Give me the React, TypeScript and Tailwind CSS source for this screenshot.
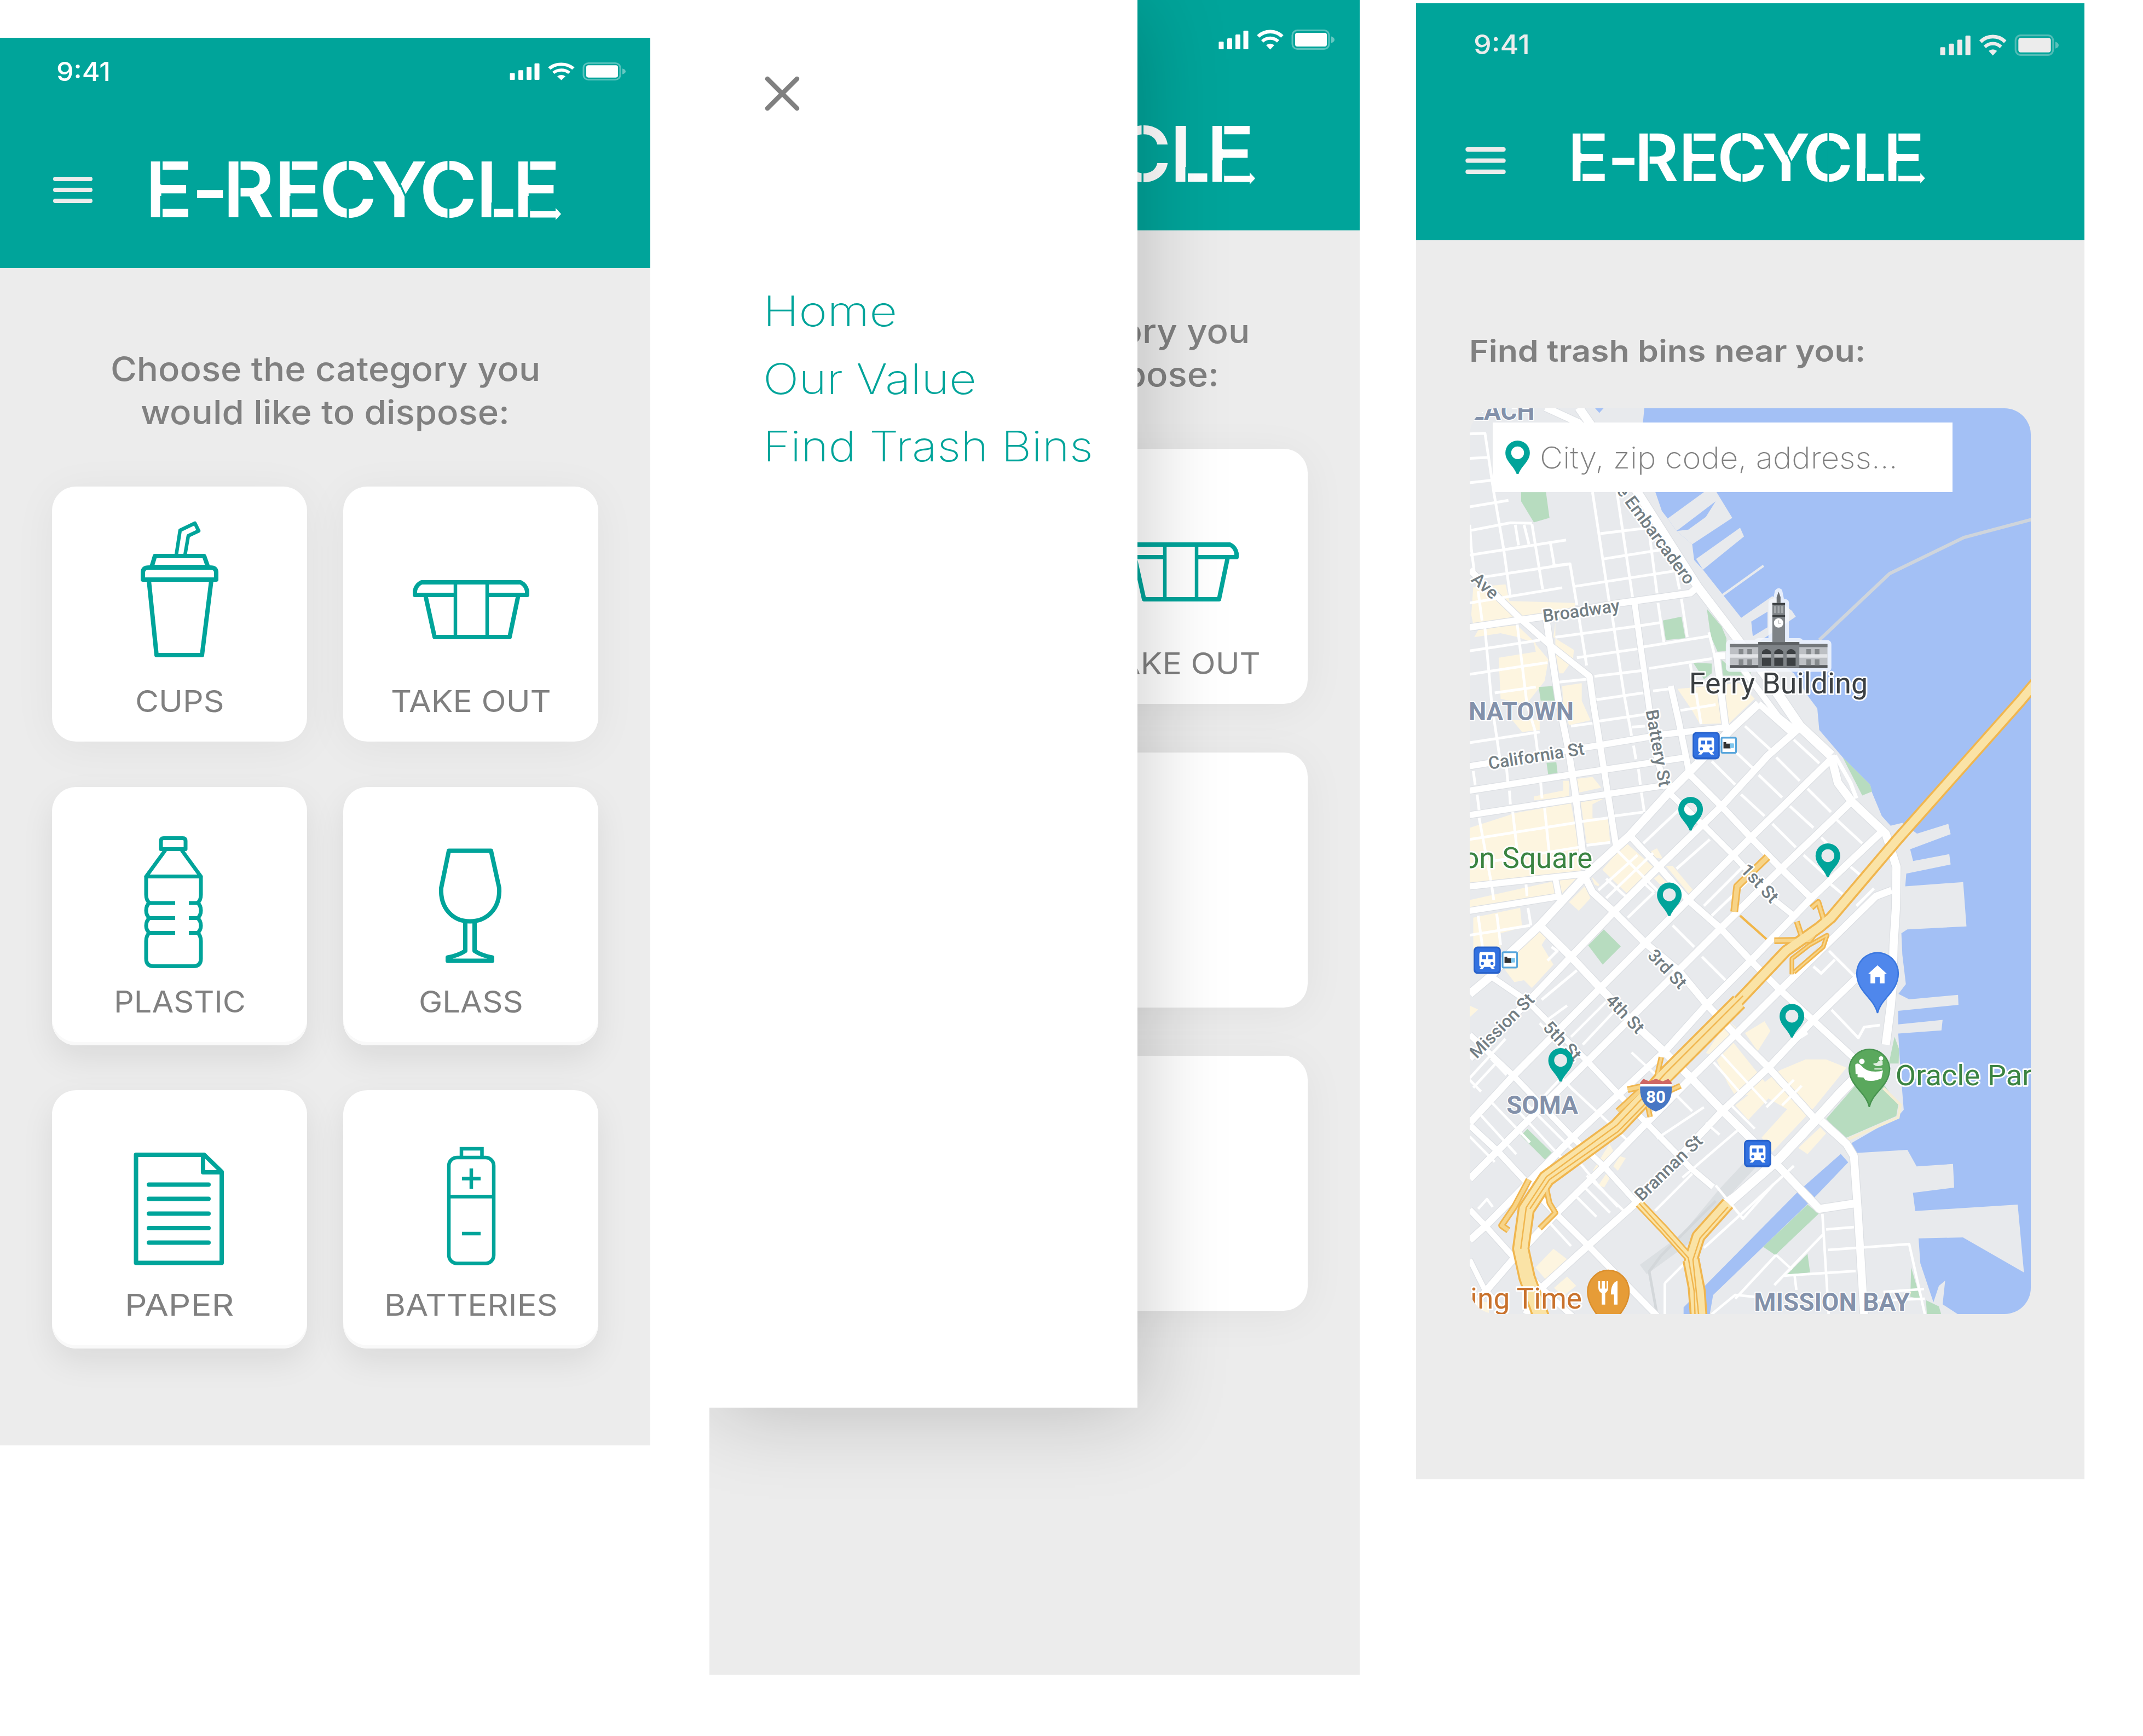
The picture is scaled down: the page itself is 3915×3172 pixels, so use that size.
import { useLayoutEffect, useRef, useState, type ReactNode } from "react";

const SANS = "font-['Inter','Noto_Sans',sans-serif]";

/* Single line of text stretched horizontally to a given width. */
function Fit({ w, className = "", children }: { w: number; className?: string; children: string }) {
  const ref = useRef<HTMLSpanElement>(null);
  const [scale, setScale] = useState(1);
  useLayoutEffect(() => {
    if (ref.current) setScale(w / ref.current.offsetWidth);
  }, [w, children]);
  return (
    <span className={`block ${className}`} style={{ width: w }}>
      <span ref={ref} className="inline-block origin-left whitespace-nowrap" style={{ transform: `scaleX(${scale})` }}>
        {children}
      </span>
    </span>
  );
}

function StatusIcons({ className, color }: { className: string; color: string }) {
  return (
    <svg viewBox="0 0 212 37" preserveAspectRatio="none" className={className} fill={color}>
      <rect x="0.5" y="22" width="9" height="14" rx="1.500" />
      <rect x="16" y="16" width="9" height="20" rx="1.500" />
      <rect x="31" y="9" width="9" height="27" rx="1.500" />
      <rect x="45.500" y="2" width="9" height="34" rx="1.500" />
      <path d="M72.500 12.500 A32 32 0 0 1 116.500 12.500" fill="none" stroke={color} strokeWidth="6.500" />
      <path d="M80 21.500 A21 21 0 0 1 109 21.500" fill="none" stroke={color} strokeWidth="6" />
      <path d="M87 28.500 Q94.500 23 102 28.500 L94.500 36.500 Z" />
      <rect x="135" y="1.500" width="67" height="34" rx="9" fill="none" stroke={color} strokeWidth="3" opacity="0.35" />
      <rect x="140" y="6" width="58" height="25" rx="4" />
      <path d="M206 12.500 q6 2 6 6 q0 4 -6 6 z" opacity="0.4" />
    </svg>
  );
}

function Hamburger({ className }: { className: string }) {
  return (
    <svg viewBox="0 0 72 50" className={className} stroke="#ececec" strokeWidth="8" strokeLinecap="round">
      <path d="M4 5 H68 M4 25 H68 M4 45 H68" />
    </svg>
  );
}

/* Stencil wordmark: text with narrow breaks cut through it. */
function Wordmark({ className }: { className: string }) {
  return (
    <svg viewBox="276 296 749 103" className={`overflow-visible ${className}`}>
      <text
        transform="scale(1.03 1)"
        x="257.5 340 395.300 486.600 566 658.500 743.700 844 909.200"
        y="397.5"
        fontSize="139.5"
        fontWeight="560"
        fontFamily="Inter, sans-serif"
        fill="#fff"
      >
        E-RECYCLE
      </text>
      <g fill="#00a49a">
        <rect x="292.500" y="294" width="4.500" height="43" />
        <rect x="292.500" y="358" width="4.500" height="44" />
        <rect x="435.500" y="294" width="4" height="108" />
        <rect x="529" y="294" width="4" height="43" />
        <rect x="529" y="358" width="4" height="44" />
        <rect x="633.500" y="292" width="3.500" height="110" />
        <rect x="817.500" y="292" width="3.500" height="110" />
        <rect x="897.500" y="370" width="4.500" height="30" />
        <rect x="937.500" y="375" width="9.500" height="26" />
        <rect x="964" y="294" width="4.500" height="43" />
        <rect x="964" y="358" width="4.500" height="44" />
        <rect x="968.500" y="378" width="54" height="8" />
      </g>
      <path d="M731 337 L741 359" stroke="#00a49a" strokeWidth="3.500" />
      <path d="M968.500 386 H1015 V380 L1025 391 L1015 402 V397.500 H968.500 Z" fill="#fff" />
    </svg>
  );
}

const iconProps = { fill: "none", stroke: "#00a49a", strokeWidth: 8, strokeLinejoin: "round" as const };

const CupIcon = () => (
  <svg viewBox="95 889 466 370" className="h-[370px] w-[466px]" {...iconProps}>
    <path d="M283 1016 H373 L380 1036 H277 Z" />
    <path d="M261 1059 V1046 Q261 1037 272 1037 H384 Q395 1037 395 1046 V1059 Z" />
    <path d="M272 1061 L286 1197 H369 L386 1061" />
    <path d="M322 1014 L329 969 L356 956 L363 970 L344 979 L338 1014" strokeWidth="6.500" />
  </svg>
);

const TakeOutIcon = () => (
  <svg viewBox="627 889 466 370" className="h-[370px] w-[466px]" {...iconProps}>
    <path d="M832 1087 H758 V1080 Q760 1069 770 1064 H951 Q961 1069 963 1080 V1087 H890" />
    <path d="M777 1087 L794 1164 H931 L947 1087" />
    <path d="M832 1064 V1164 M890 1064 V1164" strokeWidth="6.500" />
  </svg>
);

const BottleIcon = () => (
  <svg viewBox="95 1438.5 466 370" className="h-[370px] w-[466px]" {...iconProps} strokeWidth="7">
    <path d="M294 1552 V1537 Q294 1532 299 1532 H334 Q339 1532 339 1537 V1552 Z" />
    <path d="M302 1554 L267 1602 H367 L332 1554" />
    <path d="M267 1602 V1635 Q267 1646 273 1650 Q267 1655 267 1664 Q267 1673 273 1678 Q267 1683 267 1692 Q267 1700 273 1705 Q267 1710 267 1720 V1752 Q267 1766 281 1766 H353 Q367 1766 367 1752 V1720 Q367 1710 361 1705 Q367 1700 367 1692 Q367 1683 361 1678 Q367 1673 367 1664 Q367 1655 361 1650 Q367 1646 367 1635 V1602" />
    <path d="M272 1650.500 H320 M345 1650.500 H361 M272 1678 H320 M345 1678 H361 M272 1705 H320 M345 1705 H361" />
  </svg>
);

const GlassIcon = () => (
  <svg viewBox="627 1438.5 466 370" className="h-[370px] w-[466px]" {...iconProps}>
    <path d="M820 1555 H897 L912 1623 C914 1660 890 1684 858.500 1684 C827 1684 804 1660 806 1623 Z" />
    <path d="M850 1685 V1738 Q838 1746 818 1750 V1756 H899 V1750 Q879 1746 867 1738 V1685" />
  </svg>
);

const PaperIcon = () => (
  <svg viewBox="95 1992 466 370" className="h-[370px] w-[466px]" {...iconProps}>
    <path d="M248.500 2110 H373 L405 2141 V2307.500 H248.500 Z" />
    <path d="M371 2110 V2142 H405" />
    <path d="M272 2164.500 H381 M272 2190.500 H381 M272 2217.500 H381 M272 2244 H381 M272 2270.500 H381" strokeLinecap="round" />
  </svg>
);

const BatteryIcon = () => (
  <svg viewBox="627 1992 466 370" className="h-[370px] w-[466px]" {...iconProps} strokeWidth="6.500">
    <path d="M843 2114 V2099 H880.500 V2114" strokeLinejoin="miter" />
    <rect x="820" y="2115" width="82" height="193.500" rx="15" />
    <path d="M820 2186.500 H902 M844 2153.500 H878 M861 2135 V2172 M844 2254 H878" />
  </svg>
);

function Card({ icon, label, w, className }: { icon?: ReactNode; label?: string; w?: number; className: string }) {
  return (
    <div className={`flex w-[466px] flex-col items-center rounded-[44px] bg-white ${className}`}>
      {icon}
      {label && w ? (
        <Fit w={w} className="text-[55px] leading-[44px] font-[430] text-[#808080]">
          {label}
        </Fit>
      ) : null}
    </div>
  );
}

const SOFT = "h-[466px] shadow-[0_10px_80px_rgba(0,0,0,0.05)]";
const DEEP = "h-[472px] shadow-[inset_0_-6px_0_#f9f9f9,0_24px_60px_rgba(0,0,0,0.08)]";

function Prompt() {
  return (
    <div className="mt-[145px] flex flex-col items-center text-[61px] leading-[79px] font-[450] text-[#808080]">
      <Fit w={785}>Choose the category you</Fit>
      <Fit w={674}>would like to dispose:</Fit>
    </div>
  );
}

function HomeScreen() {
  return (
    <section className="mt-[69px] h-[2572px] w-[1188px] shrink-0 overflow-hidden bg-[#ececec]">
      <header className="h-[421px] bg-[#00a49a]">
        <div className="flex h-[123px] items-center justify-between pr-[45px] pl-[103px]">
          <Fit w={99} className="text-[48px] leading-[60px] font-medium text-white">
            9:41
          </Fit>
          <StatusIcons className="h-[33px] w-[212px]" color="#fff" />
        </div>
        <div className="mt-[104px] flex h-[102px] items-center pl-[97px]">
          <Hamburger className="h-[50px] w-[72px]" />
          <Wordmark className="ml-[107px] h-[103px] w-[749px]" />
        </div>
      </header>
      <Prompt />
      <div className="mt-[96px] flex flex-col gap-[82.5px] pl-[95px]">
        <div className="flex gap-[66px]">
          <Card className={SOFT} icon={<CupIcon />} label="CUPS" w={163} />
          <Card className={SOFT} icon={<TakeOutIcon />} label="TAKE OUT" w={293} />
        </div>
        <div className="flex gap-[66px]">
          <Card className={DEEP} icon={<BottleIcon />} label="PLASTIC" w={241} />
          <Card className={DEEP} icon={<GlassIcon />} label="GLASS" w={191} />
        </div>
        <div className="flex gap-[66px]">
          <Card className={DEEP} icon={<PaperIcon />} label="PAPER" w={200} />
          <Card className={DEEP} icon={<BatteryIcon />} label="BATTERIES" w={317} />
        </div>
      </div>
    </section>
  );
}

function MenuScreen() {
  return (
    <section className="relative ml-[108px] h-[3060px] w-[1188px] shrink-0 overflow-hidden bg-[#ececec]">
      <header className="h-[421px] bg-[#00a49a]">
        <div className="flex h-[145px] items-center justify-end pr-[46px]">
          <StatusIcons className="h-[37px] w-[212px]" color="#fff" />
        </div>
        <div className="mt-[86px] flex h-[102px] items-center pl-[248px]">
          <Wordmark className="h-[103px] w-[749px]" />
        </div>
      </header>
      <Prompt />
      <div className="mt-[96px] flex flex-col gap-[88.5px] pl-[95px]">
        <div className="flex gap-[66px]">
          <Card className={SOFT} />
          <Card className={SOFT} icon={<TakeOutIcon />} label="TAKE OUT" w={293} />
        </div>
        <div className="flex gap-[66px]">
          <Card className={SOFT} />
          <Card className={SOFT} />
        </div>
        <div className="flex gap-[66px]">
          <Card className={SOFT} />
          <Card className={SOFT} />
        </div>
      </div>
      <aside className="absolute top-0 left-0 h-[2572px] w-[782px] bg-white pt-[139px] pl-[101px] shadow-[10px_10px_150px_rgba(0,0,0,0.2)]">
        <svg viewBox="0 0 64 64" className="h-[64px] w-[64px]" stroke="#808080" strokeWidth="8.500" strokeLinecap="round">
          <path d="M5 5 L59 59 M59 5 L5 59" />
        </svg>
        <nav className="-ml-[3px] mt-[304px] flex flex-col text-[77px] leading-[123.5px] font-[250] text-[#00a49a]">
          <Fit w={245}>Home</Fit>
          <Fit w={390}>Our Value</Fit>
          <Fit w={603}>Find Trash Bins</Fit>
        </nav>
      </aside>
    </section>
  );
}

/* ---------- Map ---------- */

const PIN = "M-5 172 C-20 130 -63 108 -63 63 A63 63 0 0 1 63 63 C63 108 20 130 5 172 Z M33 63 A33 33 0 1 0 -33 63 A33 33 0 1 0 33 63 Z";

const WATER =
  "935,44 928,118 960,380 1025,570 1055,608 1100,672 1180,740 1190,820 1235,870 1330,990 1430,1115 1482,1130 1490,1210 1560,1300 1700,1400 1775,1520 1820,1580 1830,1690 1950,1830 2090,1970 2100,2010 2150,2130 2195,2180 2255,2165 2330,2220 2490,2170 2502,2223 2295,2300 2310,2360 2495,2325 2502,2378 2275,2425 2270,2490 2566,2468 2583,2695 2280,2710 2250,2730 2255,2840 2273,2990 2235,3040 2290,3068 2540,3045 2542,3096 2234,3127 2234,3196 2461,3173 2455,3227 2234,3243 2243,3396 2262,3633 2234,3665 1988,3807 2016,3854 2281,3838 2328,3923 2514,3910 2520,4031 2309,4058 2321,4151 2845,4118 2877,4465 2565,4286 2338,4291 2347,4418 2414,4618 2442,4534 2474,4507 2461,4628 2556,4690 2920,4690 2920,40 935,40";

const WATER_SMALL = [
  "1940,3859 1978,3902 1817,4070 1287,4581 1268,4690 1136,4690 1136,4644 1713,4060 1760,4017",
  "680,40 730,40 705,68",
];

const PIERS = [
  "1055,608 1240,473 1200,400 1260,400 1385,605 1180,740 1100,672",
  "1200,815 1425,655 1445,700 1235,870",
  "1432,1115 1590,1005 1690,1080 1710,1110 1490,1260",
];

const PIER_WATER = ["1100,672 1300,520 1250,600 1160,665", "1482,1135 1565,1085 1565,1165 1490,1210"];

const SHOPS = [
  "50,1100 60,960 225,945 245,1030 580,1040 580,1060 400,1110 60,1150",
  "65,1215 90,1170 285,1155 385,1250 290,1215 200,1195",
  "190,1320 380,1290 370,1240 445,1330 425,1440 330,1560 200,1530",
  "480,1140 470,1215 575,1280 570,1330 520,1400 500,1400 480,1290",
  "515,1465 615,1450 615,1540 660,1640 550,1665 520,1560",
  "260,1640 400,1640 400,1690 310,1700",
  "42,2190 230,2130 270,2115 560,2065 600,2290 610,2410 42,2490",
  "585,1940 670,1930 715,1985 600,2010",
  "370,2030 520,2000 520,1950 550,1950 550,2030 370,2050",
  "610,2060 730,2040 670,2070 670,2140 750,2145 760,2265 640,2270",
  "42,2560 600,2435 510,2530 42,2600",
  "720,2405 840,2265 980,2390 850,2530",
  "550,2570 630,2490 660,2550 600,2615",
  "665,2440 705,2480 700,2490 680,2480",
  "60,2650 300,2600 310,2700 200,2730 200,2820 60,2820",
  "210,2900 400,2720 435,2750 410,2790 470,2890 360,3010 320,2970 270,2980",
  "1045,2385 1080,2385 1185,2510 1165,2530",
  "985,2450 1010,2430 1050,2470 1015,2480",
  "1105,1480 1420,1450 1500,1530 1370,1655 1220,1660 1180,1590",
  "970,2310 1000,2295 1030,2350 980,2340",
  "1363,3175 1410,3217 1287,3354 1250,3343",
  "1550,3180 1580,3230 1515,3333 1450,3240",
  "1306,3380 1391,3290 1600,3550 1400,3560 1363,3500",
  "1400,3610 1630,3430 1760,3375 1865,3375 1969,3417 1808,3617 1590,3849 1535,3775 1666,3630 1570,3575 1467,3685",
  "1723,3828 1836,3722 1865,3754 1770,3860",
  "378,4440 470,4344 540,4397 440,4512",
  "473,4544 540,4486 587,4534 520,4586",
  "672,3944 757,3807 786,3860 691,3955",
  "776,3922 810,3870 840,3880 800,3945",
  "700,4020 740,3960 757,3985 730,4030",
  "42,3100 85,3120 42,3160",
  "42,4600 140,4620 140,4679 42,4679",
];

const PARKS = [
  "305,473 432,473 450,605 370,628 305,520",
  "1030,1130 1125,1110 1145,1220 1045,1230",
  "1255,1070 1330,1160 1355,1220 1355,1285 1310,1290 1275,1210",
  "1185,1345 1280,1350 1280,1400 1240,1430",
  "1330,1330 1380,1375 1480,1395 1480,1412 1335,1412",
  "395,1470 470,1465 480,1540 405,1540",
  "435,1858 485,1855 492,1915 443,1915",
  "728,2710 815,2797 722,2890 648,2792",
  "1950,1830 2090,1970 2100,2005 2050,2025",
  "2022,3500 2158,3500 2234,3607 2224,3665 1959,3780 1865,3680",
  "2215,3259 2238,3322 2236,3396 2186,3396",
  "337,3731 464,3854 432,3893 303,3765",
  "1770,4118 1827,4165 1605,4376 1543,4334",
  "1770,4370 1783,4465 1666,4476",
  "2300,4439 2347,4600 2296,4590",
  "2376,4607 2442,4639 2457,4690 2381,4690",
];

/* [width, points] */
const ROADS: [number, string][] = [
  [13, "42,175 120,172 165,473 215,760 250,1010"],
  [13, "42,640 50,760 65,880"],
  [13, "275,640 292,745"],
  [13, "320,640 345,740"],
  [13, "360,635 415,970"],
  [13, "455,735 475,850"],
  [13, "465,850 555,840 590,1050"],
  [13, "670,473 755,1030"],
  [13, "795,473 875,1010"],
  [13, "955,640 1000,990"],
  [13, "1095,870 1115,970"],
  [13, "42,300 140,295"],
  [13, "42,425 155,412"],
  [13, "42,548 240,515"],
  [13, "42,670 250,630 360,632"],
  [13, "42,795 535,718"],
  [13, "65,915 555,840"],
  [13, "42,1040 515,962"],
  [13, "710,685 960,655"],
  [13, "725,815 1040,765"],
  [13, "580,955 1100,875"],
  [13, "85,980 105,1130"],
  [13, "120,1170 155,1560 200,1860"],
  [13, "285,1150 335,1560 375,1690 395,1850"],
  [13, "600,1110 640,1360"],
  [13, "770,1100 830,1500 870,1720"],
  [13, "1005,1040 1035,1240"],
  [13, "1125,1020 1155,1215"],
  [13, "1265,1190 1300,1330"],
  [13, "42,1285 400,1230"],
  [13, "42,1405 440,1345"],
  [13, "170,1500 380,1470"],
  [13, "480,1215 890,1160 1020,1140"],
  [13, "590,1320 900,1275"],
  [13, "930,1265 1265,1210"],
  [13, "680,1415 930,1385"],
  [13, "960,1375 1280,1325"],
  [13, "1170,1350 1185,1450"],
  [13, "500,1445 640,1430"],
  [13, "690,1535 930,1500"],
  [13, "980,1490 1060,1480"],
  [13, "42,1755 400,1700"],
  [13, "560,1670 670,1655"],
  [13, "700,1645 940,1610"],
  [13, "870,1675 940,1670"],
  [13, "1120,1590 1300,1560"],
  [13, "1200,1500 1225,1660"],
  [13, "60,1900 70,1970"],
  [13, "230,1880 237,1960"],
  [13, "405,1960 412,2040"],
  [13, "245,2000 250,2070"],
  [13, "80,2020 90,2100"],
  [13, "880,1770 892,1840"],
  [13, "905,1890 915,1970"],
  [13, "920,2010 935,2110"],
  [13, "42,2250 580,2165"],
  [13, "42,2380 600,2290"],
  [13, "90,2140 150,2460"],
  [13, "262,2110 295,2400"],
  [13, "425,2090 455,2380"],
  [13, "600,2160 750,2140"],
  [13, "640,2280 760,2265"],
  [13, "780,2130 930,2110"],
  [13, "155,2490 165,2560"],
  [13, "330,2480 335,2540"],
  [13, "42,2740 350,2690"],
  [13, "340,2600 355,2690"],
  [13, "85,2640 110,2820"],
  [13, "180,2630 200,2790"],
  [13, "790,2300 970,2480 1010,2520"],
  [13, "740,2550 980,2320"],
  [13, "700,2510 900,2330"],
  [13, "740,2450 860,2560"],
  [13, "930,2270 1110,2100"],
  [13, "850,2650 985,2520"],
  [13, "940,2480 985,2520"],
  [13, "1100,2400 1270,2250"],
  [13, "1240,2590 1450,2380"],
  [13, "1280,2640 1500,2430"],
  [13, "1080,2690 1190,2800"],
  [13, "1230,2850 1350,2970"],
  [13, "410,3070 590,2920"],
  [13, "1280,1850 1400,1970"],
  [13, "1430,2020 1550,2130"],
  [13, "1450,1670 1580,1790"],
  [13, "1400,1800 1490,1885"],
  [13, "1700,1740 1830,1860"],
  [13, "1610,1830 1730,1950"],
  [13, "1770,1990 1890,2110"],
  [13, "1520,1920 1640,2035"],
  [13, "1680,2080 1800,2190"],
  [13, "1920,2150 2050,2270"],
  [13, "1590,2170 1710,2290"],
  [13, "1840,2240 1880,2280"],
  [13, "1750,2330 1860,2430"],
  [13, "1990,2390 2050,2440"],
  [13, "1890,2480 1950,2530"],
  [13, "2020,2590 2110,2500"],
  [13, "1880,2820 2010,2950"],
  [13, "1800,2900 1840,2935 1910,2865"],
  [13, "1893,3122 2030,3265 2060,3210 2140,3200"],
  [13, "1690,3290 1770,3240"],
  [13, "460,2800 490,2820 440,2870"],
  [12, "42,3470 225,3270"],
  [12, "60,3520 190,3380"],
  [12, "42,3480 100,3540"],
  [12, "150,3370 230,3455"],
  [12, "400,3190 560,3360"],
  [12, "430,3180 540,3100"],
  [12, "350,3640 500,3480"],
  [12, "560,3260 740,3080"],
  [12, "620,3300 780,3130"],
  [12, "470,3420 560,3520 700,3650"],
  [12, "80,3640 280,3860"],
  [12, "140,3580 350,3800"],
  [12, "290,3640 530,3900"],
  [12, "330,3600 600,3870"],
  [12, "42,3770 170,3900"],
  [12, "230,3900 330,4010"],
  [12, "690,3640 860,3800"],
  [12, "870,3340 1000,3460"],
  [12, "560,3850 700,4020 800,4130"],
  [12, "580,4070 690,4180"],
  [12, "620,4020 760,4160"],
  [12, "640,3970 830,4150"],
  [12, "1000,3780 1240,3620"],
  [12, "1130,3980 1410,3740"],
  [12, "990,4150 1180,3960"],
  [12, "450,4210 560,4330"],
  [12, "1250,3700 1320,3760"],
  [12, "1360,3590 1500,3730"],
  [12, "1290,3390 1420,3540"],
  [12, "1330,3350 1560,3600"],
  [12, "1560,3620 1700,3480"],
  [12, "1640,3610 1740,3510"],
  [12, "1040,3500 1180,3640"],
  [12, "1300,4020 1440,4190 1600,4010"],
  [12, "1240,4340 1700,3920"],
  [12, "1340,4100 1470,4010"],
  [12, "85,4140 130,4090 160,4130"],
  [12, "1040,4520 1160,4400"],
  [12, "1040,4679 1040,4520"],
  [12, "1846,4165 1878,4679"],
  [12, "1865,4245 2007,4233"],
  [12, "1874,4350 2290,4320 2370,4679"],
  [12, "1647,4482 2016,4458"],
  [12, "2158,4565 2366,4550"],
  [12, "1704,4482 1713,4555"],
  [12, "1609,4376 1400,4600"],
  [12, "1609,4376 1690,4450"],
  [12, "1850,4270 1600,4530"],
  [12, "1280,4679 1400,4580 1500,4590"],
  [12, "2080,4610 2370,4600"],
  [36, "430,40 600,118 900,473"],
  [44, "600,40 900,473 1210,960 1340,1130 1560,1420"],
  [50, "1560,1420 1730,1670 1890,1820"],
  [30, "1440,1380 1620,1620 1720,1700"],
  [42, "1890,1820 1925,1960 2000,2060 2170,2220 2225,2390 2222,2600 2210,2790 2205,3000 2195,3108 2170,3300"],
  [20, "1910,1820 1990,1960 2020,2040"],
  [48, "2140,3340 1931,3554 1817,3680 1628,3881 1363,4112"],
  [40, "1840,3690 1969,3807 2007,3870 2026,4133 2060,4690"],
  [34, "42,1165 420,1110 780,1045 1170,990 1215,950"],
  [32, "42,870 300,1120 470,1270 655,1415 675,1560 730,1900 790,2280"],
  [34, "435,1130 500,1560 545,1780 580,2000 620,2320"],
  [30, "885,1040 955,1540 990,1800 1045,1990"],
  [32, "1070,1465 1110,1640 1165,1910"],
  [34, "1350,1310 1305,1310 1350,1670"],
  [32, "42,1875 600,1785 1050,1710 1370,1675"],
  [32, "42,2000 550,1920 1150,1830"],
  [32, "42,2125 600,2040 1060,1970"],
  [32, "42,2490 640,2425"],
  [32, "42,2615 510,2540"],
  [30, "480,2450 500,2550"],
  [42, "1520,1555 1380,1685 1170,1900 1060,2010 860,2230 630,2440 400,2690 250,2830 150,2950 42,3040"],
  [32, "1520,1555 1700,1715"],
  [36, "1740,1670 1568,1820 1330,2080 1010,2390 780,2620 560,2850 340,3080 42,3370"],
  [36, "1890,1840 1480,2240 1390,2330 1160,2560 940,2780 710,3010 265,3459 42,3700"],
  [36, "1990,2060 1635,2400 1325,2705 1110,2920 833,3196 644,3385 189,3838 42,3986"],
  [36, "2150,2210 1790,2550 1480,2870 1255,3095 1041,3333 568,3775 123,4228 42,4300"],
  [36, "2200,2510 2120,2540 1630,3020 1401,3248 1174,3470 946,3701 729,3923 483,4165 265,4397 90,4600"],
  [36, "2030,2950 1798,3175 1571,3417 1335,3638 890,4112 653,4323 397,4555 330,4679"],
  [34, "1160,1910 1330,2080 1480,2240 1635,2400 1790,2550"],
  [34, "860,2230 1010,2390 1160,2560 1325,2705 1480,2870 1630,3020 1798,3175 2010,3370"],
  [30, "1060,2010 1240,2180 1390,2330 1600,2560 1700,2640"],
  [36, "630,2440 670,2520 780,2620 940,2780 1110,2920 1255,3095 1401,3248 1571,3417 1817,3690"],
  [40, "400,2690 560,2850 710,3010 860,3170 1041,3340 1174,3470 1335,3638 1590,3890 1830,4140 2026,4110"],
  [30, "150,2950 340,3080 644,3385 800,3550 946,3701 1174,3933 1287,4028"],
  [30, "42,3249 265,3459 568,3775 729,3923 900,4112"],
  [32, "42,3712 189,3849 483,4165 653,4333 1003,4690"],
  [30, "42,4144 123,4228 265,4386 397,4534 568,4690"],
  [26, "42,4400 114,4544 200,4640"],
];

/* [outer width, points] */
const HIGHWAYS: [number, string][] = [
  [40, "1565,2340 1410,2490 1395,2620"],
  [30, "1790,2600 1825,2570 1850,2650 1850,2710"],
  [34, "1600,2768 1780,2765 1830,2700"],
  [30, "1715,2670 1745,2760"],
  [24, "1690,2940 1690,2860 1780,2790 1870,2740 1850,2800 1700,2930"],
  [34, "240,4250 205,4225 270,4130 345,3990"],
  [30, "400,4240 480,4160 450,4110 435,4040"],
  [28, "1022,3364 1000,3460"],
  [30, "1120,3510 1010,3560"],
  [34, "850,3530 940,3510 800,3640"],
  [28, "965,3670 950,3600"],
  [48, "909,4112 1040,4250 1174,4400 1200,4500"],
  [72, "1363,4112 1212,4281 1174,4400 1190,4500 1205,4700"],
  [88, "1174,4400 1205,4560 1215,4700"],
  [62, "2960,1420 2860,1540 2230,2250 1890,2650 1830,2700 1660,2820 1400,3095"],
  [88, "1420,3080 1041,3459 984,3522 795,3722 435,3985 331,4143 303,4344 335,4491 410,4700"],
];

const STREET_LABELS: [string, number, number, number, "start" | "end"][] = [
  ["The Embarcadero", 1150, 952, 53.5, "end"],
  ["Ave", 45, 925, 42, "start"],
  ["Broadway", 420, 1138, -8, "start"],
  ["California St", 142, 1892, -9, "start"],
  ["Battery St", 942, 1592, 80, "start"],
  ["1st St", 1423, 2410, 47, "start"],
  ["3rd St", 948, 2848, 46, "start"],
  ["4th St", 732, 3078, 46, "start"],
  ["5th St", 412, 3215, 47, "start"],
  ["Mission St", 78, 3375, -45, "start"],
  ["Brannan St", 922, 4105, -44, "start"],
];

const BIN_PINS = [
  [1172, 2032],
  [1063, 2470],
  [1874, 2270],
  [1690, 3091],
  [507, 3317],
];

function Transit({ x, y, tag }: { x: number; y: number; tag?: boolean }) {
  return (
    <g transform={`translate(${x} ${y})`}>
      <rect width="139" height="140" rx="20" fill="#2862cb" />
      <rect x="8" y="8" width="123" height="122" rx="14" fill="#3271e0" />
      <path d="M36 28 H103 Q110 30 110 42 V95 Q110 102 100 104 L110 116 H94 L84 104 H55 L45 116 H29 L39 104 Q29 102 29 95 V42 Q29 30 36 28 Z" fill="#fff" />
      <path d="M42 44 H64 V64 H42 Z M75 44 H97 V64 H75 Z" fill="#3271e0" />
      <circle cx="45" cy="86" r="8" fill="#3271e0" />
      <circle cx="94" cy="86" r="8" fill="#3271e0" />
      {tag && (
        <g>
          <rect x="148" y="29" width="74" height="78" rx="6" fill="#fff" stroke="#58a6dc" strokeWidth="9" />
          <path d="M158 52 H172 V60 H194 V84 H158 Z" fill="#333" />
          <rect x="190" y="58" width="22" height="24" rx="4" fill="#7ec6ee" />
        </g>
      )}
    </g>
  );
}

function FerryBuilding() {
  const windows = [1418, 1462, 1764, 1807];
  return (
    <g>
      <path
        d="M1372 1250 H1518 V1240 H1590 V1040 L1612 1035 L1622 985 L1632 1035 L1655 1040 V1240 H1728 V1250 H1872 V1372 H1372 Z"
        fill="#fff"
        stroke="#f4f7fd"
        strokeWidth="40"
        strokeLinejoin="round"
        opacity="0.85"
      />
      <rect x="1372" y="1250" width="500" height="122" fill="#bdc0c4" />
      <rect x="1372" y="1250" width="500" height="16" fill="#75797c" />
      <rect x="1372" y="1302" width="500" height="18" fill="#e3e5e8" />
      <rect x="1372" y="1358" width="500" height="15" fill="#56595c" />
      {windows.map((x) => (
        <g key={x} fill="#85898c">
          <rect x={x} y="1276" width="24" height="26" />
          <rect x={x} y="1328" width="24" height="30" />
        </g>
      ))}
      <rect x="1518" y="1240" width="210" height="130" fill="#7f8488" />
      <rect x="1518" y="1240" width="210" height="16" fill="#5e6265" />
      {[1537, 1600, 1663].map((x) => (
        <g key={x}>
          <path d={`M${x} 1302 V1290 Q${x + 22} 1262 ${x + 46} 1290 V1302 Z`} fill="#3c4043" />
          <rect x={x} y="1302" width="46" height="18" fill="#b4b7ba" />
          <rect x={x} y="1320" width="46" height="42" fill="#3c4043" />
        </g>
      ))}
      <rect x="1590" y="1040" width="65" height="200" fill="#7f8488" />
      <rect x="1590" y="1040" width="65" height="9" fill="#3c4043" />
      <path d="M1604 1056 V1092 M1622 1056 V1092 M1640 1056 V1092" stroke="#a6aaad" strokeWidth="10" />
      <rect x="1590" y="1102" width="65" height="9" fill="#3c4043" />
      <path d="M1612 1040 V1010 L1622 982 L1632 1010 V1040 Z" fill="#6d7174" />
      <circle cx="1622" cy="1142" r="24" fill="#fff" />
      <path d="M1622 1128 V1144 H1634" fill="none" stroke="#c9c9c9" strokeWidth="5" />
    </g>
  );
}

function CityMap() {
  const area = { fontFamily: "Roboto, sans-serif", fontWeight: 700, fill: "#8391aa" };
  const halo = { stroke: "#fff", strokeWidth: 16, strokeLinejoin: "round" as const, style: { paintOrder: "stroke" } };
  return (
    <svg viewBox="42 44 2870 4634" preserveAspectRatio="none" className="block h-[1655px] w-[1025px]">
      <rect x="42" y="44" width="2880" height="4650" fill="#e8eaed" />
      {SHOPS.map((p) => (
        <polygon key={p} points={p} fill="#fdf5e0" />
      ))}
      <polygon points={WATER} fill="#a3c0f5" />
      {WATER_SMALL.map((p) => (
        <polygon key={p} points={p} fill="#a3c0f5" />
      ))}
      {PIERS.map((p) => (
        <polygon key={p} points={p} fill="#e8eaed" />
      ))}
      {PIER_WATER.map((p) => (
        <polygon key={p} points={p} fill="#a3c0f5" />
      ))}
      <path d="M1335 1000 L1545 850" stroke="#e8eaed" strokeWidth="12" />
      {PARKS.map((p) => (
        <polygon key={p} points={p} fill="#b7dcbf" />
      ))}
      <path d="M2158 3522 L2245 3607 L2234 3672 L1965 3790" fill="none" stroke="#f5edd4" strokeWidth="14" />
      <path d="M1480 3910 L1340 4060 L1150 4290 L930 4450" fill="none" stroke="#d6dadd" strokeWidth="60" opacity="0.7" />
      <path d="M1300 4100 L1020 4380 L960 4460 L1000 4679" fill="none" stroke="#d3d7da" strokeWidth="14" />
      <path d="M1830 1230 L2190 890 L2570 705 L2920 612" fill="none" stroke="#cfd5dc" strokeWidth="17" />

      <g fill="none" stroke="#dcdfe3" strokeLinejoin="round">
        {ROADS.filter(([w]) => w > 20).map(([w, p]) => (
          <polyline key={p} points={p} strokeWidth={w + 7} />
        ))}
      </g>
      <g fill="none" stroke="#fff" strokeLinejoin="round">
        {ROADS.map(([w, p]) => (
          <polyline key={p} points={p} strokeWidth={w < 20 ? w + 1 : w} />
        ))}
      </g>

      <path d="M1425 2640 L1560 2760" stroke="#f1b649" strokeWidth="12" />
      <g fill="none" strokeLinejoin="round">
        {HIGHWAYS.map(([w, p]) => (
          <polyline key={p} points={p} strokeWidth={w} stroke="#f0b64f" />
        ))}
        {HIGHWAYS.map(([w, p]) => (
          <polyline key={p} points={p} strokeWidth={w > 50 ? w - 20 : w - 16} stroke={w < 45 ? "#f7d488" : "#fae3a6"} />
        ))}
        <g stroke="#f0b64f" strokeWidth="7">
          <polyline points="1440,3050 1041,3449 984,3512 795,3712 435,3975 331,4133 303,4344" />
          <polyline points="1060,3480 800,3745 450,3990 350,4140" />
          <polyline points="1363,4130 1220,4290 1184,4400 1215,4700" />
          <polyline points="909,4112 1160,4390 1190,4560 1195,4700" />
        </g>
      </g>

      <g fontFamily="Roboto, sans-serif" fontSize="90" fontWeight="500" fill="#737e84" {...halo}>
        {STREET_LABELS.map(([t, x, y, r, anchor]) => (
          <text key={t} transform={`translate(${x} ${y}) rotate(${r})`} textAnchor={anchor}>
            {t}
          </text>
        ))}
      </g>
      <g {...area} {...halo} strokeWidth="10" fontSize="128">
        <text x="374" y="103" textAnchor="end">
          BEACH
        </text>
        <text x="574" y="1640" textAnchor="end">
          CHINATOWN
        </text>
        <text x="230" y="3654" textLength="366" lengthAdjust="spacingAndGlyphs">
          SOMA
        </text>
        <text x="1496" y="4660" textLength="797" lengthAdjust="spacingAndGlyphs">
          MISSION BAY
        </text>
      </g>

      <path d="M914 3494 L930 3475 L960 3487 L994 3475 L1030 3487 L1058 3475 L1075 3494 V3504 H914 Z" fill="#cf6663" />
      <path d="M914 3502 H1075 V3516 H914 Z" fill="#fff" />
      <path d="M914 3514 H1075 Q1082 3610 994 3642 Q907 3610 914 3514 Z" fill="#4777c4" />
      <text x="994" y="3598" textAnchor="middle" fontFamily="Roboto, sans-serif" fontWeight="700" fontSize="88" fill="#fff">
        80
      </text>

      <Transit x={1182} y={1700} tag />
      <Transit x={62} y={2798} tag />
      <Transit x={1445} y={3787} />

      <FerryBuilding />

      <g fontFamily="Roboto, sans-serif" fontSize="148" {...halo}>
        <text x="1164" y="1503" textLength="914" lengthAdjust="spacingAndGlyphs" fill="#3c4043" fontWeight="450">
          Ferry Building
        </text>
        <text x="670" y="2395" textAnchor="end" fontSize="148" fill="#3b8442" fontWeight="450">
          Union Square
        </text>
        <text x="2220" y="3507" textLength="776" lengthAdjust="spacingAndGlyphs" fontSize="144" fill="#3b8442" fontWeight="450">
          Oracle Park
        </text>
        <text x="616" y="4650" textAnchor="end" fontSize="149" fill="#c9722d" fontWeight="450">
          Dining Time
        </text>
      </g>

      {/* home */}
      <path d="M2128 3138 C2110 3060 2022 3030 2022 2935 A106 106 0 0 1 2234 2935 C2234 3030 2146 3060 2128 3138 Z" fill="#4f87ec" stroke="#3a77df" strokeWidth="7" />
      <path d="M2128 2894 L2176 2938 H2164 V2986 H2140 V2954 H2116 V2986 H2092 V2938 H2080 Z" fill="#fff" />

      {/* ballpark */}
      <path d="M2086 3619 C2070 3540 1983 3515 1983 3420 A104 107 0 0 1 2190 3420 C2190 3515 2102 3540 2086 3619 Z" fill="#5aa85d" stroke="#489450" strokeWidth="7" />
      <path d="M2014 3402 Q2026 3388 2046 3408 Q2066 3432 2096 3436 Q2130 3440 2156 3432 L2148 3472 Q2110 3492 2066 3482 L2056 3468 L2026 3466 V3450 H2016 Z" fill="#fff" />
      <circle cx="2048" cy="3386" r="14" fill="#fff" />
      <path d="M2104 3398 Q2122 3418 2154 3404 V3384 Q2140 3374 2126 3392 Z" fill="#fff" opacity="0.8" />
      <path d="M2112 3424 H2152" stroke="#fff" strokeWidth="7" opacity="0.7" />
      <circle cx="2146" cy="3370" r="11" fill="#fff" />

      {/* restaurant */}
      <path d="M751 4800 C735 4700 645 4660 645 4562 A106 108 0 0 1 857 4562 C857 4660 767 4700 751 4800 Z" fill="#e69c37" stroke="#db8f2c" strokeWidth="7" />
      <path d="M700 4510 V4545 Q702 4566 717 4570 V4630 H735 V4570 Q748 4566 750 4545 V4510 H742 V4548 H734 V4510 H717 V4548 H709 V4510 Z" fill="#fff" />
      <path d="M798 4508 Q764 4518 764 4578 H780 V4630 H798 Z" fill="#fff" />

      {BIN_PINS.map(([x, y]) => (
        <path key={x} d={PIN} transform={`translate(${x} ${y})`} fill="#00a49a" fillRule="evenodd" />
      ))}
    </svg>
  );
}

function FindScreen() {
  return (
    <section className="mt-[6px] ml-[103px] h-[2697px] w-[1221px] shrink-0 overflow-hidden bg-[#ececec]">
      <header className="h-[433px] bg-[#00a49a]">
        <div className="flex h-[150px] items-center justify-between pr-[47px] pl-[105px]">
          <Fit w={103} className="text-[50px] leading-[60px] font-medium text-[#ececec]">
            9:41
          </Fit>
          <StatusIcons className="mt-[2px] h-[39px] w-[217px]" color="#ececec" />
        </div>
        <div className="mt-[88px] flex h-[88px] items-center pl-[90px]">
          <Hamburger className="mt-[11px] h-[51px] w-[74px]" />
          <Wordmark className="ml-[122px] h-[88.5px] w-[644px]" />
        </div>
      </header>
      <Fit w={724} className="mt-[172px] ml-[97px] text-[55px] leading-[60px] font-semibold text-[#808080]">
        Find trash bins near you:
      </Fit>
      <div className="relative mt-[75px] ml-[98px] h-[1655px] w-[1025px] overflow-hidden rounded-[48px]">
        <CityMap />
        <div className="absolute top-[26px] left-[42px] flex h-[127px] w-[840px] items-center bg-white pl-[23px]">
          <svg viewBox="-63 0 126 172" className="h-[61px] w-[45px] shrink-0">
            <path d={PIN} fill="#00a49a" fillRule="evenodd" />
          </svg>
          <Fit w={654} className="ml-[18px] text-[55px] leading-[60px] font-[250] text-[#808080]">
            City, zip code, address...
          </Fit>
        </div>
      </div>
    </section>
  );
}

export default function App() {
  return (
    <main className={`flex h-[3172px] w-[3915px] items-start overflow-hidden bg-white ${SANS}`}>
      <HomeScreen />
      <MenuScreen />
      <FindScreen />
    </main>
  );
}
